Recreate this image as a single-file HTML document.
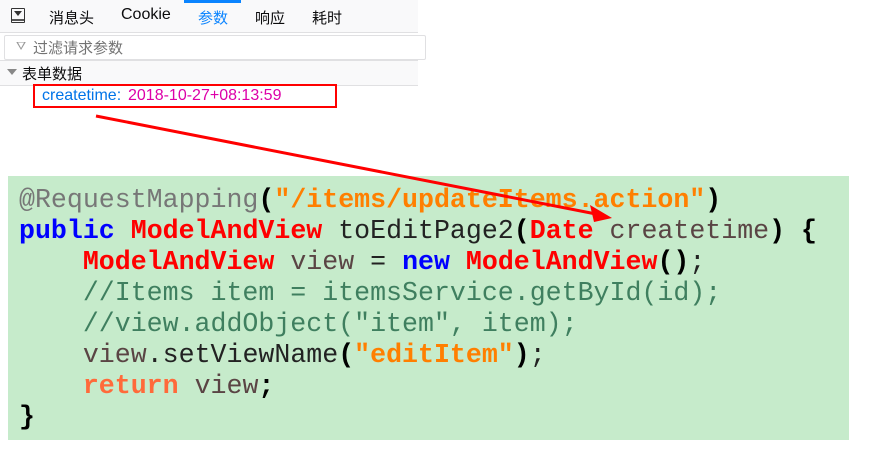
<!DOCTYPE html>
<html><head><meta charset="utf-8"><style>
body{margin:0;width:876px;height:454px;background:#fff;position:relative;overflow:hidden;font-family:"Liberation Sans","Noto Sans CJK SC",sans-serif}
.a{position:absolute}
.panel{left:0;top:0;width:418px;height:112px;background:#fff}
.tabs{left:0;top:0;width:418px;height:32px;background:#f9f9fa;border-bottom:1px solid #e0e0e2}
.tab{position:absolute;top:7px;font-size:15px;color:#0c0c0d}
.filter{left:4px;top:35px;width:420px;height:23px;border:1px solid #e0e0e2;border-radius:2px;background:#fff;font-size:15px;color:#737373}
.hdr{left:0;top:60px;width:418px;height:24px;background:#f9f9fa;border-top:1px solid #e0e0e2;border-bottom:1px solid #e0e0e2;font-size:15px;color:#0c0c0d}
.code{left:8px;top:176px;width:841px;height:264px;background:#c6ebcb;font-family:"Liberation Mono",monospace;font-size:26.6px;line-height:31px}
.code pre{margin:0;position:absolute;left:11px;top:9px;font:inherit;color:#222}
.k{color:#00f;font-weight:bold}.t{color:#f00;font-weight:bold}.s{color:#ff7f00;font-weight:bold}.c{color:#3f7f5f}.g{color:#777}.b{color:#000;font-weight:bold}.v{color:#5a4444}.r{color:#ff6a3a;font-weight:bold}
</style></head><body>
<div class="a panel"></div>
<div class="a tabs">
 <div class="a" style="left:11px;top:8px;width:12px;height:13px;border:1px solid #333;border-radius:1px"></div>
 <div class="a" style="left:14px;top:11px;width:0;height:0;border-left:4px solid transparent;border-right:4px solid transparent;border-top:5px solid #333"></div>
 <div class="a" style="left:12px;top:19px;width:12px;height:2px;background:#555"></div>
 <span class="tab" style="left:49px">消息头</span>
 <span class="tab" style="left:121px;font-size:16px;top:6px">Cookie</span>
 <span class="tab" style="left:198px;color:#0a84ff">参数</span>
 <span class="tab" style="left:255px">响应</span>
 <span class="tab" style="left:312px">耗时</span>
 <div class="a" style="left:184px;top:0;width:57px;height:3px;background:#0a84ff"></div>
</div>
<div class="a filter"><span class="a" style="left:11px;top:3px;font-size:12px;color:#999">⛛</span><span class="a" style="left:28px;top:1px">过滤请求参数</span></div>
<div class="a hdr"><span class="a" style="left:7px;top:8px;width:0;height:0;border-left:5px solid transparent;border-right:5px solid transparent;border-top:6px solid #888"></span><span class="a" style="left:22px;top:2px">表单数据</span></div>
<div class="a" style="left:42px;top:87px;font-size:16px;color:#0074e8">createtime:</div>
<div class="a" style="left:128px;top:87px;font-size:16px;color:#dd00a9">2018-10-27+08:13:59</div>
<div class="a" style="left:33px;top:84px;width:300px;height:20px;border:2px solid #f00"></div>
<div class="a code"><pre><span class="g">@RequestMapping</span><span class="b">(</span><span class="s">"/items/updateItems.action"</span><span class="b">)</span>
<span class="k">public</span> <span class="t">ModelAndView</span> toEditPage2<span class="b">(</span><span class="t">Date</span> <span class="v">createtime</span><span class="b">) {</span>
    <span class="t">ModelAndView</span> <span class="v">view</span> = <span class="k">new</span> <span class="t">ModelAndView</span><span class="b">()</span>;
    <span class="c">//Items item = itemsService.getById(id);</span>
    <span class="c">//view.addObject("item", item);</span>
    <span class="v">view</span>.setViewName<span class="b">(</span><span class="s">"editItem"</span><span class="b">)</span>;
    <span class="r">return</span> <span class="v">view</span><span class="b">;</span>
<span class="b">}</span></pre></div>
<svg class="a" style="left:0;top:0" width="876" height="454"><line x1="96" y1="116" x2="596" y2="214" stroke="#f00" stroke-width="3"/><polygon points="612,218 590,205 594,222" fill="#f00"/></svg>
</body></html>
